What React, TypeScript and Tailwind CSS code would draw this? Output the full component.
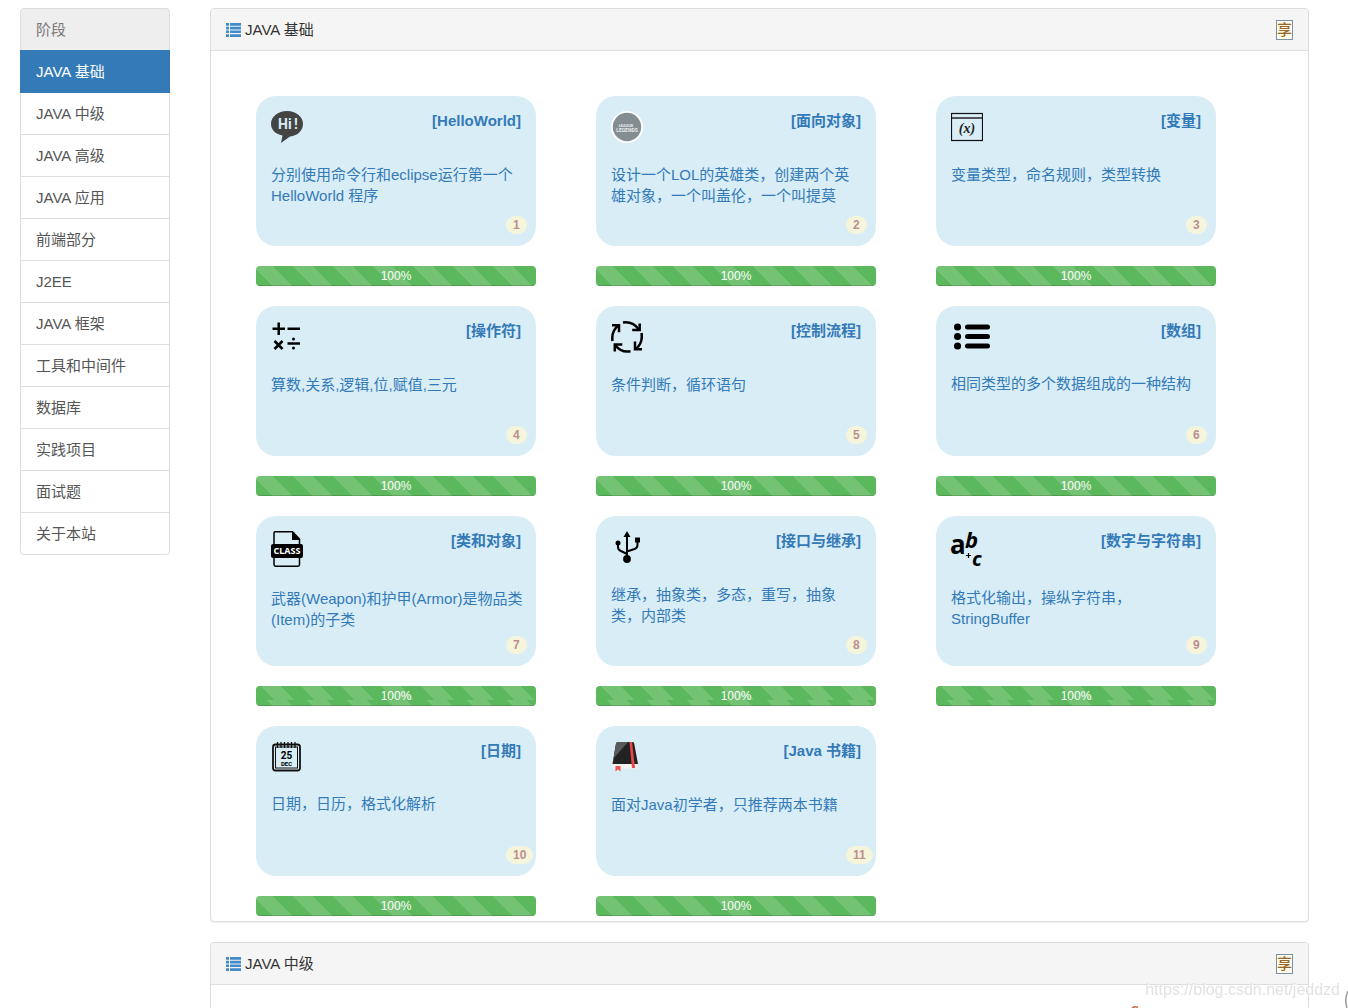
import type { ReactNode } from "react";

const stages = [
  "JAVA 基础",
  "JAVA 中级",
  "JAVA 高级",
  "JAVA 应用",
  "前端部分",
  "J2EE",
  "JAVA 框架",
  "工具和中间件",
  "数据库",
  "实践项目",
  "面试题",
  "关于本站",
];

function HiIcon() {
  return (
    <svg width="32" height="32" viewBox="0 0 32 32">
      <path d="M16 0C7 0 0 5.6 0 13c0 5.400 4 10 11.500 11.600L10 32l9-6.400C27 24.600 32 19.500 32 13 32 5.600 25 0 16 0Z" fill="#444" />
      <g fontSize="14" fontWeight="700" fill="#d9edf7" fontFamily="Roboto, sans-serif">
        <text x="7" y="18">Hi</text>
        <text x="23" y="18">!</text>
      </g>
    </svg>
  );
}

function LeagueIcon() {
  return (
    <svg width="32" height="32" viewBox="0 0 32 32">
      <circle cx="16" cy="16" r="16" fill="#fff" />
      <circle cx="16" cy="16" r="14.200" fill="#848d92" />
      <g fill="#e8ecee" textAnchor="middle" fontFamily="Roboto, sans-serif" fontWeight="700">
        <text x="15" y="15.500" fontSize="4">LEAGUE</text>
        <text x="16" y="20.500" fontSize="5">LEGENDS</text>
      </g>
    </svg>
  );
}

function VariableIcon() {
  return (
    <svg width="32" height="32" viewBox="0 0 32 32">
      <rect x="0.500" y="2.500" width="31" height="27" fill="none" stroke="#111" strokeWidth="1.200" />
      <path d="M1 7h30" stroke="#444" strokeWidth="1.800" />
      <text x="16" y="21.500" textAnchor="middle" fontSize="14" fontStyle="italic" fontWeight="700" fill="#222" fontFamily="Liberation Serif, serif">
        (x)
      </text>
    </svg>
  );
}

function OperatorIcon() {
  return (
    <svg width="32" height="32" viewBox="0 0 32 32" fill="none" stroke="#000" strokeWidth="2.500">
      <path d="M1.500 7.700h12.500M7.700 1.500v12.500M16.500 7.700h12.500M3.500 20l8 8M11.500 20l-8 8M16.500 22.500h12.500" />
      <circle cx="22.500" cy="18" r="1.500" fill="#000" stroke="none" />
      <circle cx="22.500" cy="27" r="1.500" fill="#000" stroke="none" />
    </svg>
  );
}

function CycleIcon() {
  return (
    <svg width="32" height="32" viewBox="0 0 32 32" fill="none" stroke="#000" strokeWidth="2.500">
      <path d="M12 1.600C19 0.500 24 3.500 27.500 8" />
      <path d="M28.700 2.500v6.500h-7.500" />
      <path d="M30.500 12c1.200 7-1 12-5.500 16" />
      <path d="M24 20.500v7.700h7" />
      <path d="M19.500 30.300C13 31.500 8 29 4.500 24.500" />
      <path d="M3.800 30.500v-7h7.500" />
      <path d="M1.500 20C0.500 13 3 8 7.500 4.300" />
      <path d="M1 4.200h7v7" />
    </svg>
  );
}

function ArrayIcon() {
  return (
    <svg width="40" height="31" viewBox="0 0 40 31" stroke="#000" strokeLinecap="round" strokeWidth="5">
      <path d="M16.500 6h20M16.500 15.500h20M16.500 25h20" />
      <path d="M6.500 6h0.100M6.500 15.500h0.100M6.500 25h0.100" strokeWidth="7" />
    </svg>
  );
}

function ClassIcon() {
  return (
    <svg width="32" height="36" viewBox="0 0 32 36">
      <path d="M3 13V2q0-1.300 1.300-1.300H21.500L28.500 8v5M3 27v6.500q0 1.700 1.500 1.700h22.500q1.500 0 1.500-1.700V27" fill="none" stroke="#000" strokeWidth="1.500" />
      <path d="M21 0.500V9h8.300Z" />
      <rect y="13" width="32" height="14" rx="2" />
      <text x="16" y="23.300" textAnchor="middle" fontSize="9" fontWeight="700" fill="#fff" fontFamily="Noto Sans, sans-serif">
        CLASS
      </text>
    </svg>
  );
}

function UsbIcon() {
  return (
    <svg width="32" height="32" viewBox="0 0 32 32" fill="none" stroke="#000" strokeWidth="2">
      <path d="M16 4v24M7 12v4q0 3 3 4l6 3M26.500 9v5q0 3-3 4L16 20.500" />
      <path d="M16 0l3.500 6h-7Z" fill="#000" stroke="none" />
      <circle cx="7" cy="12" r="2.500" fill="#000" stroke="none" />
      <path d="M24 6.500h5v5h-5z" fill="#000" stroke="none" />
      <circle cx="16" cy="28" r="3.900" fill="#000" stroke="none" />
    </svg>
  );
}

function LettersIcon() {
  return (
    <svg width="33" height="35" viewBox="0 0 33 35" className="overflow-visible" fontFamily="Noto Sans, sans-serif" fontWeight="700">
      <text x="-1" y="23" fontSize="26">a</text>
      <text x="14" y="17" fontSize="22" fontStyle="italic">b</text>
      <text x="21" y="34.500" fontSize="20" fontStyle="italic">c</text>
      <path d="M15 24.500h5M17.500 22v5" stroke="#000" strokeWidth="1.200" />
    </svg>
  );
}

function CalendarIcon() {
  return (
    <svg width="31" height="31" viewBox="0 0 31 31">
      <g fill="none" stroke="#111">
        <rect x="2" y="3.500" width="27" height="26" rx="2.500" strokeWidth="1.800" />
        <rect x="4.500" y="6" width="22" height="21" strokeWidth="1" />
        <path d="M6.500 1v6M10 1v6M13.500 1v6M17 1v6M20.500 1v6M24 1v6" strokeWidth="1.300" />
      </g>
      <g fill="#000" textAnchor="middle" fontFamily="Roboto, sans-serif" fontWeight="700">
        <text x="15.500" y="17.500" fontSize="10">25</text>
        <text x="15.500" y="24.800" fontSize="6">DEC</text>
      </g>
    </svg>
  );
}

function BookIcon() {
  return (
    <svg width="32" height="32" viewBox="0 0 32 32">
      <path d="M2 23h24l1 4.500H3.500Q1 27 1.500 24Z" fill="#f1f1f1" />
      <path d="M5 2.500Q5.200 1 7 1h14.500q1.500 0 1.700 1.500L27 23H1.500Z" fill="#222" />
      <path d="M5 2.500Q5.200 1 7 1H17L2.500 17.500Z" fill="#58595b" />
      <path d="M18.500 1h2.500l3 26h-3Z" fill="#e8484a" />
      <path d="M4.500 25h5v5.500L7 28.500l-2.500 2Z" fill="#f05553" />
    </svg>
  );
}

type Lesson = { title: string; text: string; icon: ReactNode; seam?: boolean };

const lessons: Lesson[] = [
  { title: "[HelloWorld]", text: "分别使用命令行和eclipse运行第一个HelloWorld 程序", icon: <HiIcon /> },
  { title: "[面向对象]", text: "设计一个LOL的英雄类，创建两个英雄对象，一个叫盖伦，一个叫提莫", icon: <LeagueIcon /> },
  { title: "[变量]", text: "变量类型，命名规则，类型转换", icon: <VariableIcon /> },
  { title: "[操作符]", text: "算数,关系,逻辑,位,赋值,三元", icon: <OperatorIcon /> },
  { title: "[控制流程]", text: "条件判断，循环语句", icon: <CycleIcon /> },
  { title: "[数组]", text: "相同类型的多个数据组成的一种结构", icon: <ArrayIcon /> },
  { title: "[类和对象]", text: "武器(Weapon)和护甲(Armor)是物品类(Item)的子类", icon: <ClassIcon />, seam: true },
  { title: "[接口与继承]", text: "继承，抽象类，多态，重写，抽象类，内部类", icon: <UsbIcon />, seam: true },
  { title: "[数字与字符串]", text: "格式化输出，操纵字符串，StringBuffer", icon: <LettersIcon />, seam: true },
  { title: "[日期]", text: "日期，日历，格式化解析", icon: <CalendarIcon /> },
  { title: "[Java 书籍]", text: "面对Java初学者，只推荐两本书籍", icon: <BookIcon /> },
];

const stripes =
  "bg-[linear-gradient(45deg,rgba(255,255,255,.15)_25%,transparent_25%,transparent_50%,rgba(255,255,255,.15)_50%,rgba(255,255,255,.15)_75%,transparent_75%)] bg-[size:40px_40px]";

function Progress({ seam }: { seam?: boolean }) {
  return (
    <div
      role="progressbar"
      aria-valuenow={100}
      aria-label="学习进度"
      className="relative mt-5 h-5 overflow-hidden rounded bg-[#5cb85c] text-center text-xs leading-5 text-white"
    >
      <div aria-hidden="true" className="absolute inset-0 flex flex-col">
        {seam && <div className={`h-3.5 bg-position-[5px_0] ${stripes}`} />}
        <div className={`flex-1 ${seam ? "bg-position-[37px_-14px]" : "bg-position-[37px_0]"} ${stripes}`} />
        <div className="absolute inset-x-0 bottom-0 h-px bg-black/15" />
      </div>
      <span className="relative">100%</span>
    </div>
  );
}

function LessonCard({ lesson, index }: { lesson: Lesson; index: number }) {
  return (
    <div className="w-[280px]">
      <a href="#lesson" className="relative block h-[150px] rounded-[20px] bg-[#d9edf7] p-[15px] text-[#337ab7]">
        <div className="flex items-start justify-between">
          {lesson.icon}
          <strong className="-my-px font-bold">{lesson.title}</strong>
        </div>
        <p className="mt-[21px] -mr-0.5">{lesson.text}</p>
        <span className="absolute top-[120px] left-[250px] rounded-full bg-[#f5f5dc] px-[7px] text-xs leading-[18px] font-bold text-[#bc8f8f]">
          {index + 1}
        </span>
      </a>
      <Progress seam={lesson.seam} />
    </div>
  );
}

function Panel({ title, children }: { title: string; children?: ReactNode }) {
  return (
    <section className="mb-5 rounded border border-[#ddd] bg-white shadow-[0_1px_1px_rgba(0,0,0,0.05)]">
      <header className="flex items-center justify-between rounded-t border-b border-[#ddd] bg-[#f5f5f5] px-[15px] py-2.5 text-[#333]">
        <h2 className="flex items-center gap-1">
          <svg width="15" height="14" viewBox="0 0 15 14" fill="#428bca">
            <path d="M0 0h3v2.800H0zM0 3.800h3v2.600H0zM0 7.500h3v2.600H0zM0 11.200h3V14H0zM4 0h11v2.800H4zM4 3.800h11v2.600H4zM4 7.500h11v2.600H4zM4 11.200h11V14H4z" />
          </svg>
          {title}
        </h2>
        <button type="button" className="h-5 w-[17px] border border-[#7890a8] bg-[#fffbe6] text-[15px] leading-[18px] font-medium text-[#96682d]">
          享
        </button>
      </header>
      {children}
    </section>
  );
}

export default function App() {
  return (
    <div className="flex h-screen items-start gap-10 overflow-hidden bg-white pt-2 pr-[39px] pl-5 font-['Liberation_Sans','Noto_Sans_CJK_SC',sans-serif] text-[15px] leading-[21px]">
      <nav aria-label="阶段" className="w-[150px] shrink-0">
        <div className="rounded-t border border-[#ddd] bg-[#eee] px-[15px] py-2.5 text-[#777]">阶段</div>
        {stages.map((stage, i) => (
          <a
            key={stage}
            href="#stage"
            aria-current={i === 0 ? "page" : undefined}
            className={`-mt-px block border px-[15px] py-2.5 last:rounded-b ${
              i === 0 ? "relative border-[#337ab7] bg-[#337ab7] text-white" : "border-[#ddd] text-[#555]"
            }`}
          >
            {stage}
          </a>
        ))}
      </nav>
      <main className="min-w-0 flex-1">
        <Panel title="JAVA 基础">
          <div className="flex flex-wrap gap-x-[60px] gap-y-5 px-[45px] pt-[45px] pb-[5px]">
            {lessons.map((lesson, i) => (
              <LessonCard key={lesson.title} lesson={lesson} index={i} />
            ))}
          </div>
        </Panel>
        <Panel title="JAVA 中级">
          <div className="h-20" />
        </Panel>
      </main>
      <span className="fixed right-2 bottom-2 text-base leading-5 text-[#e2e2e2] [text-shadow:1px_1px_0_#fff]">https://blog.csdn.net/jeddzd</span>
      <svg aria-hidden="true" className="fixed right-0 bottom-0" width="220" height="20" viewBox="0 0 220 20" fill="none">
        <path d="M4 20q3-2 6-0.500" stroke="#c96a4a" strokeWidth="1.500" />
        <path d="M220 3q-4 8-1 17" stroke="#999" strokeWidth="1.500" />
      </svg>
    </div>
  );
}
